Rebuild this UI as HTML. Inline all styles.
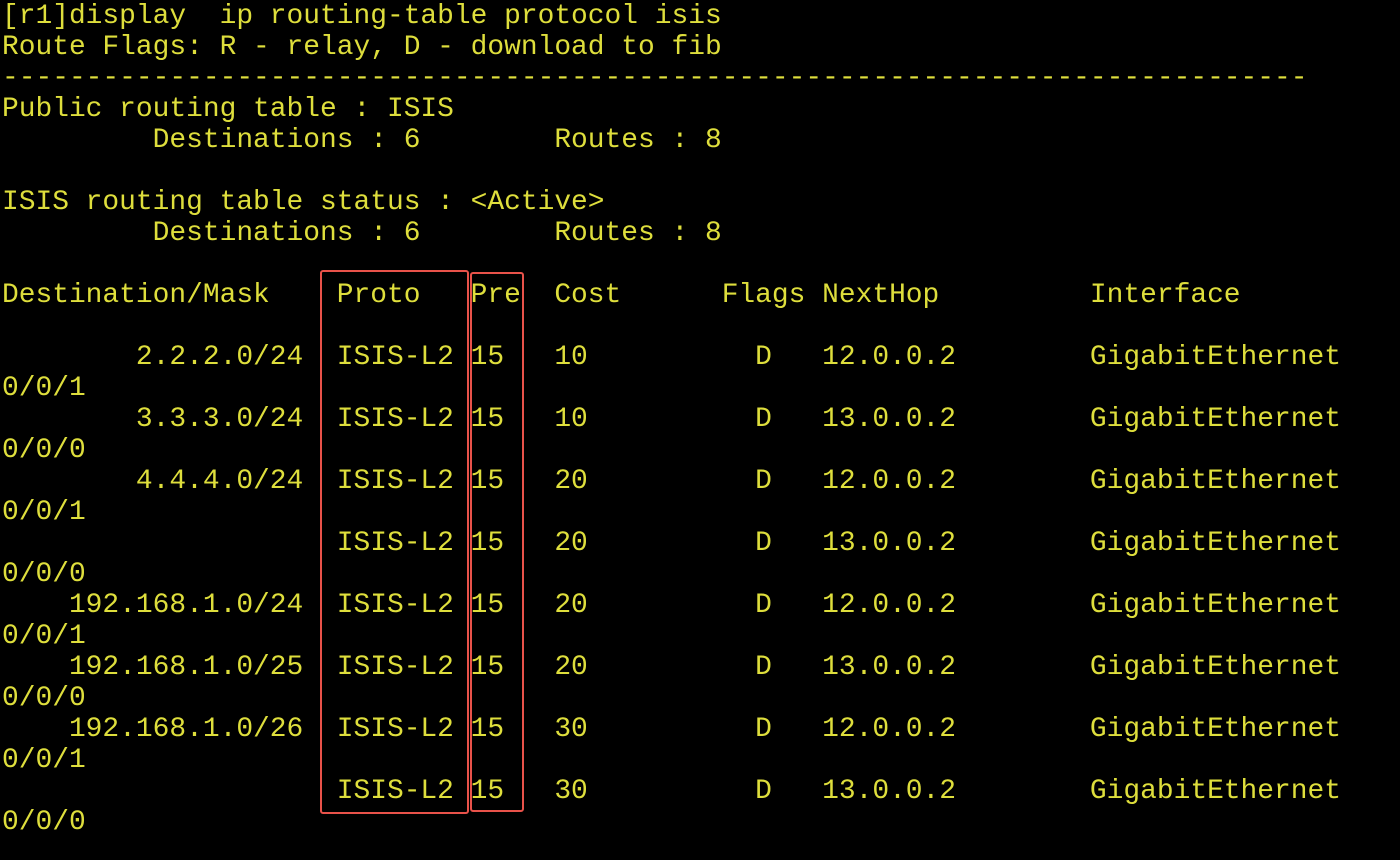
<!DOCTYPE html>
<html><head><meta charset="utf-8"><style>
html,body{margin:0;padding:0;background:#000;width:1400px;height:860px;overflow:hidden}
pre{margin:0;position:absolute;left:2px;top:1px;font-family:"Liberation Mono","Courier New",monospace;font-size:27.9px;line-height:31px;color:#dede3c;white-space:pre}
.b{position:absolute;border:2.5px solid #e8524a;border-radius:3px;box-sizing:border-box}
</style></head><body>
<pre>[r1]display  ip routing-table protocol isis
Route Flags: R - relay, D - download to fib
------------------------------------------------------------------------------
Public routing table : ISIS
         Destinations : 6        Routes : 8

ISIS routing table status : &lt;Active&gt;
         Destinations : 6        Routes : 8

Destination/Mask    Proto   Pre  Cost      Flags NextHop         Interface

        2.2.2.0/24  ISIS-L2 15   10          D   12.0.0.2        GigabitEthernet
0/0/1
        3.3.3.0/24  ISIS-L2 15   10          D   13.0.0.2        GigabitEthernet
0/0/0
        4.4.4.0/24  ISIS-L2 15   20          D   12.0.0.2        GigabitEthernet
0/0/1
                    ISIS-L2 15   20          D   13.0.0.2        GigabitEthernet
0/0/0
    192.168.1.0/24  ISIS-L2 15   20          D   12.0.0.2        GigabitEthernet
0/0/1
    192.168.1.0/25  ISIS-L2 15   20          D   13.0.0.2        GigabitEthernet
0/0/0
    192.168.1.0/26  ISIS-L2 15   30          D   12.0.0.2        GigabitEthernet
0/0/1
                    ISIS-L2 15   30          D   13.0.0.2        GigabitEthernet
0/0/0</pre>
<div class="b" style="left:320px;top:270px;width:149px;height:544px"></div>
<div class="b" style="left:470px;top:272px;width:54px;height:540px"></div>
</body></html>
